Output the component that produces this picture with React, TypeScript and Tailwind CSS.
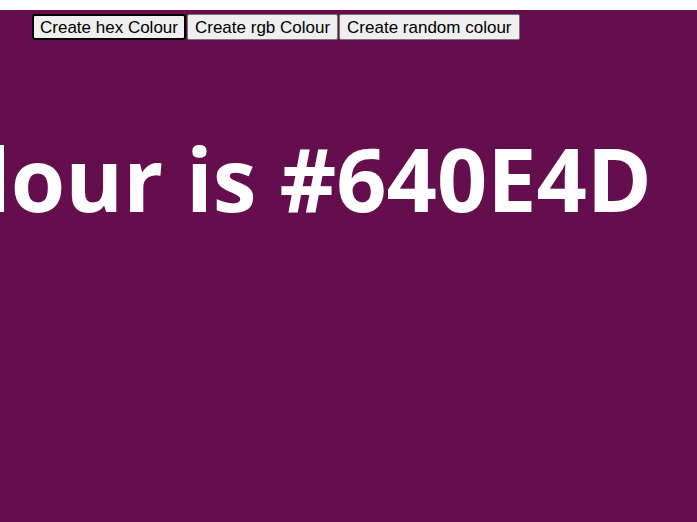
import React, { useState } from "react";

// --- Colour helpers ---
const randomHex = (): string => {
    const n = Math.floor(Math.random() * 0xffffff);
    return "#" + n.toString(16).padStart(6, "0").toUpperCase();
};

const randomRgb = (): string => {
    const c = () => Math.floor(Math.random() * 256);
    return `rgb(${c()},${c()},${c()})`;
};

const btn =
    "h-[26px] px-[7px] bg-[#efefef] border border-[#767676] rounded-[2px] text-[17px] leading-none text-black font-['Liberation_Sans',Arial,sans-serif] hover:bg-[#e5e5e5]";

const App: React.FC = () => {
    const [colour, setColour] = useState("#640E4D");
    const [active, setActive] = useState(0);

    return (
        <div className="w-full h-[522px] bg-white pt-[10px] overflow-hidden">
            <div className="h-full overflow-hidden" style={{ backgroundColor: colour }}>
                {/* Buttons */}
                <div className="flex pl-[32px] pt-[4px]">
                    <button
                        onClick={() => { setColour(randomHex()); setActive(0); }}
                        className={`${btn} ${active === 0 ? "outline-2 outline-black outline-offset-[-2px] rounded-[3px]" : ""}`}
                    >
                        Create hex Colour
                    </button>
                    <button
                        onClick={() => { setColour(randomRgb()); setActive(1); }}
                        className={`${btn} ml-px ${active === 1 ? "outline-2 outline-black outline-offset-[-2px]" : ""}`}
                    >
                        Create rgb Colour
                    </button>
                    <button
                        onClick={() => {
                            setColour(Math.random() > 0.5 ? randomHex() : randomRgb());
                            setActive(2);
                        }}
                        className={`${btn} ml-px ${active === 2 ? "outline-2 outline-black outline-offset-[-2px]" : ""}`}
                    >
                        Create random colour
                    </button>
                </div>

                {/* Heading */}
                <div className="flex justify-end pr-[45px] mt-[78px]">
                    <h1 className="whitespace-nowrap text-white font-bold text-[88px] leading-[120px] font-['Open_Sans',sans-serif] shrink-0">
                        Current Colour is {colour}
                    </h1>
                </div>
            </div>
        </div>
    );
};

export default App;
